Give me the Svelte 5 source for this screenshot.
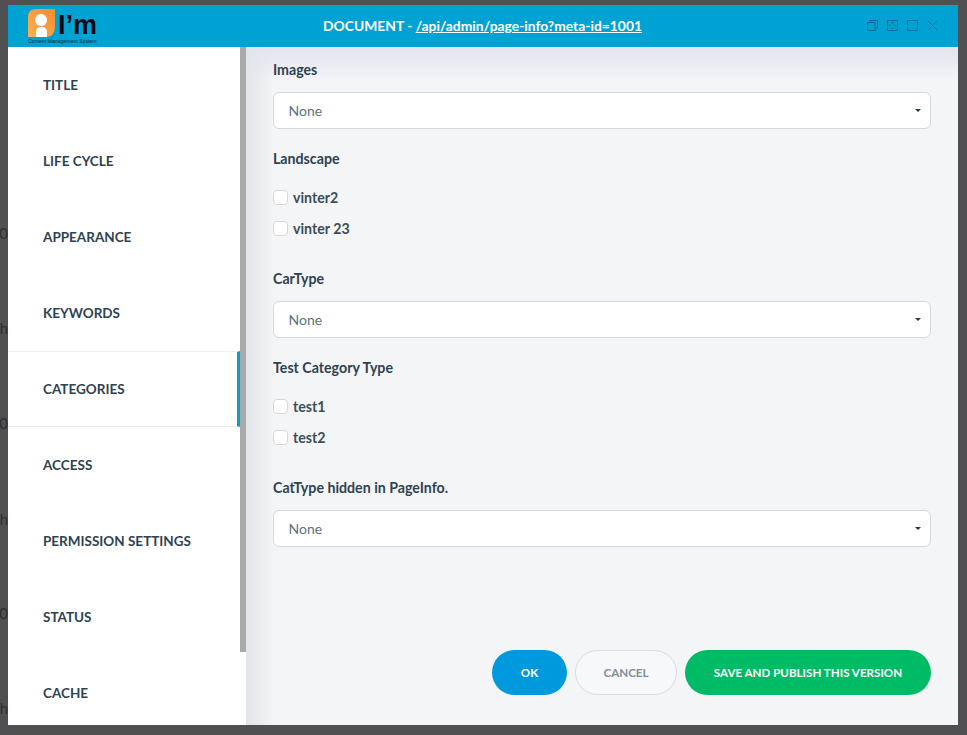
<script>
	const sections = ['TITLE', 'LIFE CYCLE', 'APPEARANCE', 'KEYWORDS', 'CATEGORIES', 'ACCESS', 'PERMISSION SETTINGS', 'STATUS', 'CACHE'];
	const behind = [
		{ y: 224, t: '0' },
		{ y: 319, t: 'th' },
		{ y: 414, t: '00' },
		{ y: 510, t: 'th' },
		{ y: 604, t: '0' },
		{ y: 699, t: 'th' }
	];
</script>

<div class="page">
	{#each behind as b}
		<span class="behind" style="top: {b.y}px">{b.t}</span>
	{/each}

	<div class="modal">
		<header class="head">
			<div class="logo">
				<svg width="28" height="28" viewBox="0 0 28 28" aria-hidden="true">
					<defs>
						<linearGradient id="leaf" x1="0" y1="1" x2="1" y2="0">
							<stop offset="0" stop-color="#fbb254" />
							<stop offset="1" stop-color="#f58a2e" />
						</linearGradient>
					</defs>
					<path d="M8 0 H27 V18 Q27 28 17 28 H0 V8 Q0 0 8 0 Z" fill="url(#leaf)" />
					<circle cx="13" cy="11" r="6" fill="#fff" />
					<path d="M8 28 V23 Q8 18 13.5 18 Q19 18 19 23 V28 Z" fill="#fff" />
				</svg>
				<span class="logo-name">I’m</span>
				<span class="logo-sub">Content Management System</span>
			</div>
			<div class="head-title">DOCUMENT - <a href="#doc">/api/admin/page-info?meta-id=1001</a></div>
			<div class="head-icons">
				<svg width="11" height="11" viewBox="0 0 11 11" fill="none" stroke="#0b6a90">
					<rect x="0.5" y="2.5" width="7.5" height="8" />
					<path d="M3 2.5 V0.5 H10.5 V8 H8" />
				</svg>
				<svg width="11" height="11" viewBox="0 0 11 11" fill="none" stroke="#0b6a90">
					<rect x="0.5" y="0.5" width="10" height="10" />
					<path d="M5.5 1.5 L7 3.5 H4 Z M5.5 9.5 L7 7.5 H4 Z M1.5 5.5 L3.5 4 V7 Z M9.5 5.5 L7.5 4 V7 Z" fill="#0b6a90" stroke="none" />
				</svg>
				<svg width="11" height="11" viewBox="0 0 11 11" fill="none" stroke="#0b6a90">
					<rect x="0.5" y="0.5" width="10" height="10" />
				</svg>
				<svg width="11" height="11" viewBox="0 0 11 11" fill="none" stroke="#0b6a90" stroke-width="0.8">
					<path d="M1 1 L10 10 M10 1 L1 10" />
				</svg>
			</div>
		</header>

		<div class="body">
			<nav class="side">
				{#each sections as s}
					<div class="item" class:active={s === 'CATEGORIES'}>{s}</div>
				{/each}
				<div class="thumb"></div>
			</nav>

			<main class="main">
				<section class="field">
					<div class="label">Images</div>
					<div class="select">None<i class="caret"></i></div>
				</section>

				<section class="field">
					<div class="label">Landscape</div>
					<div class="checks">
						<label class="check"><span class="box"></span>vinter2</label>
						<label class="check"><span class="box"></span>vinter 23</label>
					</div>
				</section>

				<section class="field">
					<div class="label">CarType</div>
					<div class="select">None<i class="caret"></i></div>
				</section>

				<section class="field">
					<div class="label">Test Category Type</div>
					<div class="checks">
						<label class="check"><span class="box"></span>test1</label>
						<label class="check"><span class="box"></span>test2</label>
					</div>
				</section>

				<section class="field">
					<div class="label">CatType hidden in PageInfo.</div>
					<div class="select">None<i class="caret"></i></div>
				</section>

				<div class="actions">
					<button class="btn ok">OK</button>
					<button class="btn cancel">CANCEL</button>
					<button class="btn save">SAVE AND PUBLISH THIS VERSION</button>
				</div>
			</main>
		</div>
	</div>
</div>

<style>
	:global(body) {
		background: #505052;
		overflow: hidden;
	}

	.page {
		position: relative;
		width: 967px;
		height: 735px;
		padding: 5px 9px 10px 8px;
		box-sizing: border-box;
		background: #505052;
		font-family: Lato, sans-serif;
		color: #2f4250;
		overflow: hidden;
	}

	.behind {
		position: absolute;
		right: 959px;
		font-size: 15px;
		line-height: 18px;
		color: #2d2f33;
	}

	.modal {
		position: relative;
		display: flex;
		flex-direction: column;
		height: 720px;
		background: #f4f5f7;
	}

	.head {
		position: relative;
		display: flex;
		align-items: center;
		justify-content: center;
		flex: none;
		height: 42px;
		padding-bottom: 1px;
		box-sizing: border-box;
		background: #00a2d3;
		color: #fff;
	}

	.logo {
		position: absolute;
		left: 20px;
		top: 4px;
		width: 70px;
		height: 36px;
	}
	.logo svg {
		display: block;
	}
	.logo-name {
		position: absolute;
		left: 30px;
		top: 4px;
		font-family: 'Liberation Sans', sans-serif;
		font-weight: 700;
		font-size: 27px;
		line-height: 24px;
		color: #0a0a14;
	}
	.logo-sub {
		position: absolute;
		left: 0;
		top: 28.5px;
		font-family: 'Liberation Sans', sans-serif;
		font-size: 5.2px;
		line-height: 6px;
		white-space: nowrap;
		color: #0a2a48;
	}

	.head-title {
		font-size: 13.85px;
		font-weight: 700;
		margin-left: -1px;
	}
	.head-title a {
		color: #fff;
	}

	.head-icons {
		position: absolute;
		right: 20px;
		top: 15px;
		display: flex;
		gap: 9px;
	}
	.head-icons svg {
		display: block;
	}

	.body {
		position: relative;
		display: flex;
		flex: 1;
		min-height: 0;
	}

	.side {
		position: relative;
		flex: none;
		width: 238px;
		background: #fff;
		overflow: hidden;
	}

	.item {
		box-sizing: border-box;
		height: 76px;
		padding-left: 35px;
		line-height: 77px;
		font-size: 13.5px;
		font-weight: 700;
		color: #2f4250;
	}
	.item.active {
		height: 76px;
		line-height: 75px;
		border-top: 1px solid #eeeef0;
		border-bottom: 1px solid #eeeef0;
		border-right: 3px solid #0f9bc9;
		margin-right: 6px;
	}

	.thumb {
		position: absolute;
		top: 0;
		right: 0;
		width: 6px;
		height: 605px;
		background: #a9a9aa;
	}

	.main {
		position: relative;
		flex: 1;
		padding: 13px 27px 0;
		background:
			linear-gradient(#e2e4ee, rgba(244, 245, 247, 0) 34px),
			linear-gradient(90deg, #e3e4e7, rgba(244, 245, 247, 0) 28px),
			#f4f5f7;
	}

	.field {
		margin-bottom: 20px;
	}

	.label {
		font-size: 14.2px;
		line-height: 20px;
		font-weight: 700;
		color: #2f4250;
		margin-bottom: 12px;
	}

	.select {
		position: relative;
		box-sizing: border-box;
		height: 37px;
		padding-left: 14.5px;
		line-height: 35px;
		font-size: 14px;
		color: #5c7280;
		background: #fff;
		border: 1px solid #d5d8dd;
		border-radius: 6px;
	}

	.caret {
		position: absolute;
		right: 9px;
		top: 16px;
		border-top: 3px solid #243a44;
		border-left: 3px solid transparent;
		border-right: 3px solid transparent;
	}

	.checks {
		display: flex;
		flex-direction: column;
		gap: 11px;
		padding: 6px 0 11px;
	}

	.check {
		display: flex;
		align-items: center;
		gap: 5px;
		height: 20px;
		font-size: 14.2px;
		font-weight: 700;
		color: #3b4e5a;
	}

	.box {
		box-sizing: border-box;
		width: 15px;
		height: 15px;
		background: #fff;
		border: 1px solid #d5d8e0;
		border-radius: 4px;
	}

	.actions {
		position: absolute;
		right: 27px;
		bottom: 30px;
		display: flex;
		gap: 8px;
	}

	.btn {
		height: 45px;
		border: none;
		border-radius: 23px;
		font-family: inherit;
		font-size: 11.6px;
		font-weight: 700;
		color: #fff;
	}
	.ok {
		width: 75px;
		background: #0099dd;
	}
	.cancel {
		width: 102px;
		background: #f7f8fa;
		border: 1px solid #d9dde3;
		color: #7f8f9b;
	}
	.save {
		width: 246px;
		background: #00bb66;
	}
</style>
